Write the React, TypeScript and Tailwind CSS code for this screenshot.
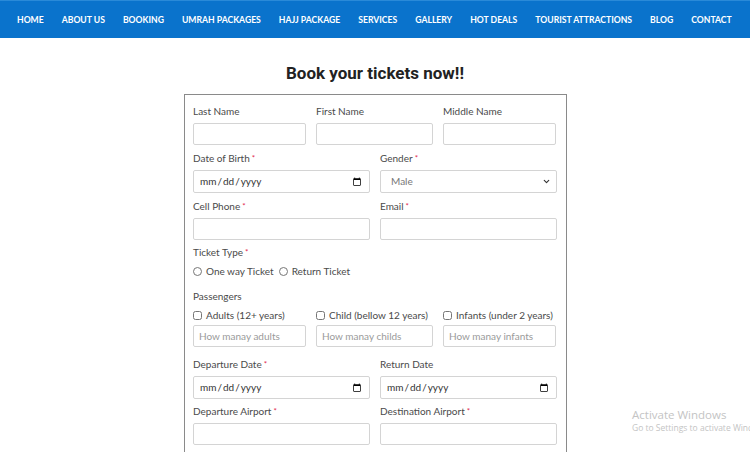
import React from 'react';
import { ChevronDown } from 'lucide-react';

const navItems = [
  'Home',
  'About Us',
  'Booking',
  'Umrah Packages',
  'Hajj Package',
  'Services',
  'Gallery',
  'Hot Deals',
  'Tourist Attractions',
  'Blog',
  'Contact',
];

function Label({ text, required }: { text: string; required?: boolean }) {
  return (
    <div className="h-[12px] leading-[12px] text-[10px] text-[#4a4a4a] mb-[6px] whitespace-nowrap">
      {text}
      {required && <span className="text-[#e2264d] ml-[2px] align-top text-[8px]">*</span>}
    </div>
  );
}

function TextInput({ placeholder }: { placeholder?: string }) {
  return (
    <input
      type="text"
      placeholder={placeholder}
      className="block w-full h-[22px] border border-[#d4d4d4] rounded-[2px] px-[5px] text-[10px] text-[#555] placeholder:text-[#9a9a9a] outline-none bg-white"
    />
  );
}

function DateInput() {
  return (
    <input
      type="date"
      className="block w-full h-[23px] border border-[#d4d4d4] rounded-[2px] px-[5px] text-[10px] text-[#333] outline-none bg-white"
    />
  );
}

export default function App() {
  return (
    <div className="relative w-[750px] h-[452px] overflow-hidden bg-white font-['Lato','Noto_Sans',sans-serif]">
      <nav className="h-[38px] bg-[#0a73cc] border-t border-[#2a8ad8] flex items-center pl-[17px] gap-[18px]">
        {navItems.map((item) => (
          <a key={item} className="text-white uppercase text-[8.65px] font-bold whitespace-nowrap pt-[1px]">
            {item}
          </a>
        ))}
      </nav>

      <h1 className="mt-[24px] text-center font-['Roboto',sans-serif] font-bold text-[17px] leading-[22px] text-[#222]">
        Book your tickets now!!
      </h1>

      <form className="ml-[184px] mt-[10px] w-[383px] border border-[#8a8a8a] pl-[8px] pr-[9px] pt-[10px] pb-[20px]">
        <div className="grid grid-cols-[113px_117px_113px] gap-x-[10px]">
          <div>
            <Label text="Last Name" />
            <TextInput />
          </div>
          <div>
            <Label text="First Name" />
            <TextInput />
          </div>
          <div>
            <Label text="Middle Name" />
            <TextInput />
          </div>
        </div>

        <div className="grid grid-cols-2 gap-x-[10px] mt-[7px]">
          <div>
            <Label text="Date of Birth" required />
            <DateInput />
          </div>
          <div>
            <Label text="Gender" required />
            <div className="relative">
              <select className="block appearance-none w-full h-[23px] border border-[#d4d4d4] rounded-[2px] pl-[10px] text-[10px] text-[#777] outline-none bg-white">
                <option>Male</option>
                <option>Female</option>
              </select>
              <ChevronDown size={9} strokeWidth={3} className="absolute right-[6px] top-[7px] text-[#333]" />
            </div>
          </div>
        </div>

        <div className="grid grid-cols-2 gap-x-[10px] mt-[7px]">
          <div>
            <Label text="Cell Phone" required />
            <TextInput />
          </div>
          <div>
            <Label text="Email" required />
            <TextInput />
          </div>
        </div>

        <div className="mt-[6px]">
          <Label text="Ticket Type" required />
          <div className="flex items-center text-[10px] text-[#4a4a4a] h-[14px]">
            <label className="flex items-center gap-[4px]">
              <input type="radio" name="ticket" className="w-[9px] h-[9px] m-0" />
              One way Ticket
            </label>
            <label className="flex items-center gap-[4px] ml-[5px]">
              <input type="radio" name="ticket" className="w-[9px] h-[9px] m-0" />
              Return Ticket
            </label>
          </div>
        </div>

        <div className="mt-[12px]">
          <Label text="Passengers" />
          <div className="grid grid-cols-[113px_117px_113px] gap-x-[10px]">
            {[
              ['Adults (12+ years)', 'How manay adults'],
              ['Child (bellow 12 years)', 'How manay childs'],
              ['Infants (under 2 years)', 'How manay infants'],
            ].map(([label, ph]) => (
              <div key={label}>
                <label className="flex items-center gap-[4px] h-[14px] text-[10px] text-[#4a4a4a] whitespace-nowrap">
                  <input type="checkbox" className="w-[9px] h-[9px] m-0" />
                  {label}
                </label>
                <div className="mt-[3px]">
                  <TextInput placeholder={ph} />
                </div>
              </div>
            ))}
          </div>
        </div>

        <div className="grid grid-cols-2 gap-x-[10px] mt-[11px]">
          <div>
            <Label text="Departure Date" required />
            <DateInput />
          </div>
          <div>
            <Label text="Return Date" />
            <DateInput />
          </div>
        </div>

        <div className="grid grid-cols-2 gap-x-[10px] mt-[6px]">
          <div>
            <Label text="Departure Airport" required />
            <TextInput />
          </div>
          <div>
            <Label text="Destination Airport" required />
            <TextInput />
          </div>
        </div>
      </form>

      <div className="absolute left-[632px] top-[408px] font-['Open_Sans',sans-serif] text-[#c4c4c4] whitespace-nowrap">
        <div className="text-[11.5px] leading-[14px]">Activate Windows</div>
        <div className="text-[8.5px] leading-[12px]">Go to Settings to activate Windows.</div>
      </div>
    </div>
  );
}
